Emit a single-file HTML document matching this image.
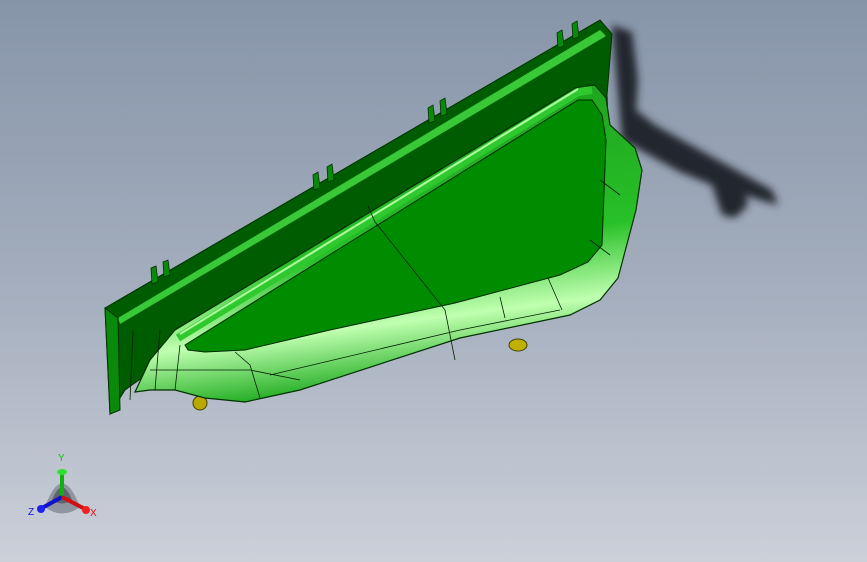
<!DOCTYPE html>
<html><head><style>
html,body{margin:0;padding:0;}
body{width:867px;height:562px;overflow:hidden;background:linear-gradient(#8795a9 0%,#a3adbd 50%,#ccd0d9 100%);}
svg{position:absolute;left:0;top:0;}
</style></head><body>
<svg width="867" height="562" viewBox="0 0 867 562">
<defs>
<filter id="bl" x="-20%" y="-20%" width="140%" height="140%"><feGaussianBlur stdDeviation="4"/></filter>
<linearGradient id="rim" x1="0" y1="0" x2="0.2" y2="1">
<stop offset="0" stop-color="#1a9a1a"/><stop offset="0.6" stop-color="#28c028"/><stop offset="0.82" stop-color="#c0ffb0"/><stop offset="1" stop-color="#28b028"/></linearGradient>
</defs>
<!-- shadow -->
<path d="M612,25 L632,32 L638,80 L636,110 L655,125 L700,150 L745,175 L772,190 L778,205 L760,200 L745,195 L748,205 L735,218 L722,215 L712,185 L680,172 L640,150 L622,140 Z" fill="#24282e" filter="url(#bl)"/>
<!-- back wall -->
<path d="M105,308 L600,20 L612,34 L607,95 L608,120 L160,365 L125,390 L110,414 Z" fill="#005c00" stroke="#003000" stroke-width="1"/>
<path d="M118,318 L600,30 L606,36 L120,324 Z" fill="#38c838"/>
<path d="M105,308 L118,318 L120,410 L110,414 Z" fill="#0a8a0a" stroke="#003000" stroke-width="1"/>
<!-- ribs -->
<g fill="#0a8a0a" stroke="#003000" stroke-width="0.8">
<path d="M151,268 L156,266 L158,282 L152,284Z"/><path d="M163,262 L168,260 L170,275 L164,277Z"/>
<path d="M313,175 L318,172 L320,188 L314,190Z"/><path d="M327,167 L332,164 L334,180 L328,182Z"/>
<path d="M428,108 L433,105 L435,121 L429,123Z"/><path d="M440,101 L445,98 L447,114 L441,116Z"/>
<path d="M557,33 L562,30 L564,46 L558,48Z"/><path d="M572,24 L577,21 L579,37 L573,39Z"/>
</g>
<!-- yellow clips -->
<ellipse cx="200" cy="403" rx="7" ry="7" fill="#b8a800" stroke="#404000"/>
<ellipse cx="518" cy="345" rx="9" ry="6" fill="#c0b000" stroke="#404000"/>
<!-- outer body -->
<path d="M135,392 L150,360 L175,330 L575,88 L595,85 L606,98 L610,125 L635,148 L642,170 L636,210 L618,278 L600,300 L570,315 L460,338 L300,390 L245,402 L205,398 L175,390 L150,390 Z" fill="url(#rim)" stroke="#003000" stroke-width="1.2"/>
<!-- inner panel -->
<path d="M185,345 L578,100 L592,100 L602,115 L606,140 L602,245 L588,262 L560,275 L455,303 L330,330 L245,350 L205,352 L188,350 Z" fill="#008c00" stroke="#002800" stroke-width="1"/>
<!-- rim tube -->
<path d="M178,338 L578,92 L592,90" fill="none" stroke="#2fc82f" stroke-width="8"/>
<path d="M180,334 L578,89" fill="none" stroke="#b0ffa0" stroke-width="2"/>
<!-- lines -->
<g fill="none" stroke="#002000" stroke-width="0.8">
<path d="M368,206 L375,222 L445,310 L455,360"/>
<path d="M160,330 L155,390"/><path d="M133,331 L130,400"/>
<path d="M235,352 L250,365 L260,398"/>
<path d="M180,345 L175,390"/>
<path d="M500,297 L505,318"/><path d="M548,278 L562,310"/>
<path d="M600,180 L620,195"/><path d="M590,240 L610,255"/>
<path d="M150,370 L250,370 L300,380"/>
<path d="M270,375 L460,330 L560,310"/>
</g>
<!-- triad -->
<g>
<path d="M45,507 Q62,460 80,507 Q62,520 45,507Z" fill="#6d737c" opacity="0.6"/>
<path d="M52,500 Q62,475 72,500 Q62,507 52,500Z" fill="#3f444b" opacity="0.6"/>
<line x1="62" y1="497" x2="62" y2="474" stroke="#10b010" stroke-width="4"/>
<ellipse cx="62" cy="472" rx="5" ry="3" fill="#30e030"/>
<line x1="62" y1="497" x2="42" y2="508" stroke="#1010d0" stroke-width="4"/>
<circle cx="41" cy="509" r="4" fill="#2020f0"/>
<line x1="62" y1="497" x2="85" y2="509" stroke="#d01010" stroke-width="4"/>
<circle cx="86" cy="510" r="4" fill="#f02020"/>
<text x="58" y="461" font-family="Liberation Sans,sans-serif" font-size="10" fill="#10c010">Y</text>
<text x="28" y="515" font-family="Liberation Sans,sans-serif" font-size="10" fill="#1010e0">Z</text>
<text x="90" y="516" font-family="Liberation Sans,sans-serif" font-size="10" fill="#e01010">X</text>
</g>
</svg>
</body></html>
